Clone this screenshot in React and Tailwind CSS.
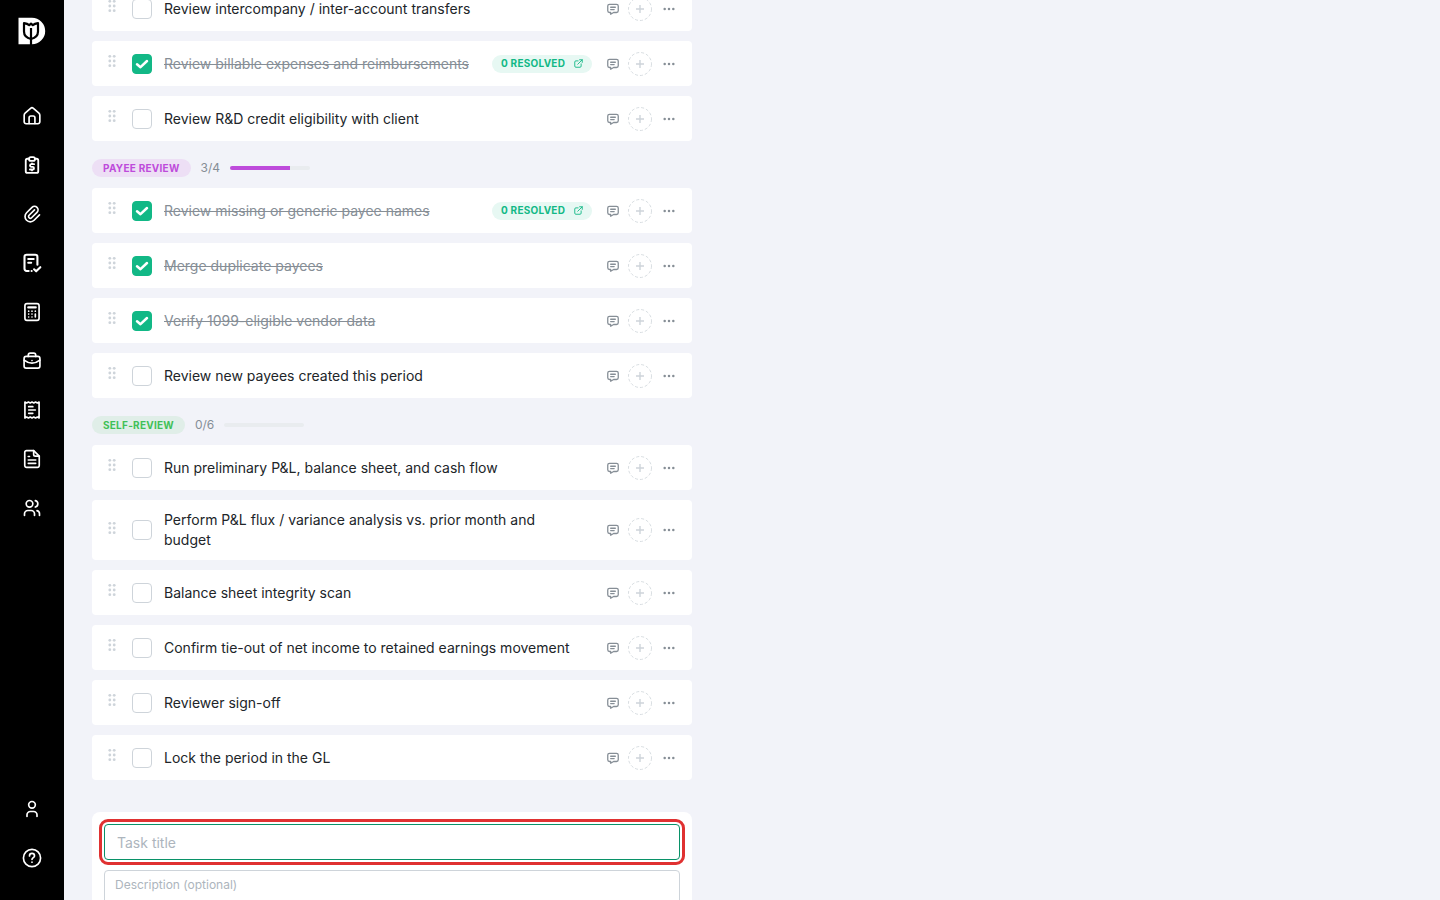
import React, { useState } from "react";
import { TbPaperclip, TbUser, TbUsers } from "react-icons/tb";

function Icon({ children, className = "size-5", strokeWidth = 2 }) {
  return (
    <svg
      viewBox="0 0 24 24"
      fill="none"
      stroke="currentColor"
      strokeWidth={strokeWidth}
      strokeLinecap="round"
      strokeLinejoin="round"
      aria-hidden="true"
      className={className}
    >
      {children}
    </svg>
  );
}

const HomeIcon = () => (
  <Icon>
    <path d="M2.6 11c0-1 .4-1.900 1.100-2.500l6.600-5.700a2.600 2.600 0 0 1 3.400 0l6.600 5.700c.7.6 1.100 1.500 1.100 2.500V19a2.300 2.300 0 0 1-2.300 2.300H4.900A2.300 2.300 0 0 1 2.600 19z" />
    <path d="M8.500 21v-7a2 2 0 0 1 2-2h3a2 2 0 0 1 2 2v7" />
  </Icon>
);

const ClipboardDollarIcon = () => (
  <Icon strokeWidth={2.200}>
    <path d="M8.500 4.500H6.500a2 2 0 0 0-2 2V19.500a2 2 0 0 0 2 2h11a2 2 0 0 0 2-2V6.500a2 2 0 0 0-2-2h-2" />
    <rect x="8.500" y="2.500" width="7" height="4.500" rx="2" />
    <path d="M14.500 11h-3.300a1.500 1.500 0 0 0 0 3.200h1.600a1.500 1.500 0 0 1 0 3.200H9.500M12 10v1M12 17.500v1" />
  </Icon>
);

const NoteCheckIcon = () => (
  <Icon strokeWidth={2.500}>
    <path d="M8 21.500H5.500a2.500 2.500 0 0 1-2.500-2.500V4.500A2.500 2.500 0 0 1 5.500 2h10.500a2.500 2.500 0 0 1 2.500 2.500V14" />
    <path d="M7.500 7.200h6.500M7.500 11.700h3.500M11.500 21.500h.1M14.500 19.500l2.500 2.500 5-5" />
  </Icon>
);

const CalculatorIcon = () => (
  <Icon>
    <rect x="3.500" y="2" width="17" height="20" rx="2.500" />
    <path d="M7.500 6.500h9" strokeWidth="2.600" />
    <path d="M8 11h.01M12 11h.01M16 11h.01M8 14.500h.01M12 14.500h.01M8 18h.01M12 18h.01M16 14.500v3.500" />
  </Icon>
);

const BriefcaseIcon = () => (
  <Icon>
    <rect x="2.500" y="6.500" width="19" height="14" rx="2.500" />
    <path d="M7.500 6.500V5a2.500 2.500 0 0 1 2.500-2.500h4A2.500 2.500 0 0 1 16.500 5v1.500" />
    <path d="M2.500 11c6 4.600 13 4.600 19 0M12 11.500v.01" />
  </Icon>
);

const ReceiptIcon = () => (
  <Icon>
    <path d="M3.500 2.500v19l2.100-1 2.100 1 2.200-1 2.100 1 2.100-1 2.200 1 2.100-1 2.100 1v-19l-2.100 1-2.100-1-2.200 1-2.100-1-2.100 1-2.200-1-2.100 1z" />
    <path d="M8 8h5M8 12h8M8 16h5" />
  </Icon>
);

const FileIcon = () => (
  <Icon>
    <path d="M14 2H5.500A2.200 2.200 0 0 0 3.300 4.200v15.600A2.200 2.200 0 0 0 5.500 22h13a2.200 2.200 0 0 0 2.200-2.200V8.500z" />
    <path d="M14 2v4.500a2 2 0 0 0 2 2h4.500M7.500 9h1.500M7.500 13.200h9M7.500 17.200h9" />
  </Icon>
);

const HelpIcon = () => (
  <Icon>
    <circle cx="12" cy="12" r="10.300" />
    <path d="M9 9.500a3 3 0 0 1 6 0c0 2-3 2.300-3 4.300M12 17v.01" />
  </Icon>
);

function Logo() {
  return (
    <svg viewBox="0 0 28 28" className="size-7" aria-hidden="true">
      <path d="M.5.800H14a13.200 13.200 0 0 1 0 26.400H.5z" fill="#fff" />
      <g fill="none" stroke="#000" strokeWidth="2.200" strokeLinejoin="round">
        <path d="M6 6.200c2.200.3 4 1 5.200 2L13 6.600l1.800 1.600c1.200-1 3-1.700 5.200-2v8.300c0 4-2.800 6.500-7 7.500-4.200-1-7-3.500-7-7.500z" />
        <path d="M13 11v17" />
      </g>
    </svg>
  );
}

const mainNav = [
  ["Home", HomeIcon],
  ["Billing", ClipboardDollarIcon],
  ["Attachments", () => <TbPaperclip className="size-5" />],
  ["Tasks", NoteCheckIcon],
  ["Calculator", CalculatorIcon],
  ["Portfolio", BriefcaseIcon],
  ["Receipts", ReceiptIcon],
  ["Documents", FileIcon],
  ["Team", () => <TbUsers className="size-5" />],
];

const footerNav = [
  ["Account", () => <TbUser className="size-5" />],
  ["Help", HelpIcon],
];

function NavLinks({ items }) {
  return items.map(([label, Glyph]) => (
    <a key={label} href="#" aria-label={label} className="grid size-10 place-items-center">
      <Glyph />
    </a>
  ));
}

function Sidebar() {
  return (
    <aside className="flex w-16 shrink-0 flex-col items-center bg-black pt-[17px] pb-[22px] text-white">
      <a href="#" aria-label="Dashboard">
        <Logo />
      </a>
      <nav aria-label="Main" className="mt-[51px] flex flex-col gap-[9px]">
        <NavLinks items={mainNav} />
      </nav>
      <nav aria-label="Support" className="mt-auto flex flex-col gap-[9px]">
        <NavLinks items={footerNav} />
      </nav>
    </aside>
  );
}

function TaskCard({ title, done = false, resolved }) {
  const [checked, setChecked] = useState(done);
  return (
    <li className="flex min-h-[45px] items-center rounded bg-white px-4 py-2.5">
      <button type="button" aria-label="Reorder task" className="mr-4 pb-[5px] text-[#ced4da]">
        <svg viewBox="0 0 8 14" className="h-3.5 w-2" fill="currentColor" aria-hidden="true">
          <circle cx="1.800" cy="2.300" r="1.400" />
          <circle cx="6.200" cy="2.300" r="1.400" />
          <circle cx="1.800" cy="7" r="1.400" />
          <circle cx="6.200" cy="7" r="1.400" />
          <circle cx="1.800" cy="11.700" r="1.400" />
          <circle cx="6.200" cy="11.700" r="1.400" />
        </svg>
      </button>
      <label className="flex flex-1 items-center gap-3 pr-2">
        <span className="grid shrink-0">
          <input
            type="checkbox"
            checked={checked}
            onChange={(e) => setChecked(e.target.checked)}
            className="col-start-1 row-start-1 size-5 appearance-none rounded border border-[#ced4da] bg-white checked:border-[#12b886] checked:bg-[#12b886]"
          />
          {checked && (
            <svg
              viewBox="0 0 20 20"
              className="pointer-events-none col-start-1 row-start-1 size-5"
              fill="none"
              stroke="#fff"
              strokeWidth="2.500"
              strokeLinecap="round"
              strokeLinejoin="round"
              aria-hidden="true"
            >
              <path d="M5 10.200 8.500 13.200 15 7" />
            </svg>
          )}
        </span>
        <span className={checked ? "text-sm leading-5 text-[#868e96] line-through" : "text-sm leading-5 text-[#212529]"}>
          {title}
        </span>
      </label>
      {resolved !== undefined && (
        <a
          href="#"
          className="flex h-[18px] w-[100px] shrink-0 items-center justify-between rounded-full bg-[#e7f8f3] px-[9px] text-[10px] font-bold tracking-wide text-[#12b886] uppercase"
        >
          {resolved} resolved
          <Icon className="size-[9px]" strokeWidth={2.400}>
            <path d="M11 5H5a3 3 0 0 0-3 3v11a3 3 0 0 0 3 3h11a3 3 0 0 0 3-3v-6M10 14 22 2M15 2h7v7" />
          </Icon>
        </a>
      )}
      <button type="button" aria-label="Comments" className="ml-3.5 shrink-0 text-[#868e96]">
        <Icon className="size-3.5" strokeWidth={2.200}>
          <path d="M8 9h8M8 13h6M18 4a3 3 0 0 1 3 3v8a3 3 0 0 1-3 3h-5l-5 3v-3H6a3 3 0 0 1-3-3V7a3 3 0 0 1 3-3z" />
        </Icon>
      </button>
      <button type="button" aria-label="Assign task" className="ml-2 size-6 shrink-0 text-[#ced4da]">
        <svg viewBox="0 0 24 24" className="size-6" fill="none" stroke="currentColor" aria-hidden="true">
          <circle cx="12" cy="12" r="11.500" strokeDasharray="3 2" opacity=".8" />
          <path d="M12 8v8M8 12h8" strokeWidth="1.400" />
        </svg>
      </button>
      <button type="button" aria-label="More actions" className="ml-2.5 shrink-0 text-[#868e96]">
        <svg viewBox="0 0 14 14" className="size-3.5" fill="currentColor" aria-hidden="true">
          <circle cx="2.700" cy="7" r="1.250" />
          <circle cx="7" cy="7" r="1.250" />
          <circle cx="11.300" cy="7" r="1.250" />
        </svg>
      </button>
    </li>
  );
}

function SectionHeader({ title, done, total, badgeClass, barClass }) {
  return (
    <div className="flex items-center gap-2.5 pt-[18px] pb-[11px]">
      <h2 className={`flex h-[18px] items-center rounded-full px-[11px] text-[10px] font-bold tracking-wide uppercase ${badgeClass}`}>
        {title}
      </h2>
      <span className="text-xs leading-[18px] text-[#868e96]">
        {done}/{total}
      </span>
      <div className="h-1 w-20 overflow-hidden rounded-full bg-[#e9ecef]">
        <div className={`h-full ${barClass}`} style={{ width: `${(done / total) * 100}%` }} />
      </div>
    </div>
  );
}

function TaskList({ tasks }) {
  return (
    <ul className="flex flex-col gap-2.5">
      {tasks.map((task) => (
        <TaskCard key={task.title} {...task} />
      ))}
    </ul>
  );
}

const reviewTasks = [
  { title: "Review intercompany / inter-account transfers" },
  { title: "Review billable expenses and reimbursements", done: true, resolved: 0 },
  { title: "Review R&D credit eligibility with client" },
];

const payeeTasks = [
  { title: "Review missing or generic payee names", done: true, resolved: 0 },
  { title: "Merge duplicate payees", done: true },
  { title: "Verify 1099-eligible vendor data", done: true },
  { title: "Review new payees created this period" },
];

const selfReviewTasks = [
  { title: "Run preliminary P&L, balance sheet, and cash flow" },
  { title: "Perform P&L flux / variance analysis vs. prior month and budget" },
  { title: "Balance sheet integrity scan" },
  { title: "Confirm tie-out of net income to retained earnings movement" },
  { title: "Reviewer sign-off" },
  { title: "Lock the period in the GL" },
];

export default function App() {
  return (
    <div className="flex h-screen overflow-hidden bg-[#f2f3f9] font-['Inter',sans-serif]">
      <Sidebar />
      <main className="min-w-0 flex-1 overflow-hidden px-7">
        <div className="-mt-3.5 max-w-[600px]">
          <TaskList tasks={reviewTasks} />
          <SectionHeader title="Payee review" done={3} total={4} badgeClass="bg-[#eddff5] text-[#be4bdb]" barClass="bg-[#be4bdb]" />
          <TaskList tasks={payeeTasks} />
          <SectionHeader title="Self-review" done={0} total={6} badgeClass="bg-[#e0eee8] text-[#40c057]" barClass="bg-[#40c057]" />
          <TaskList tasks={selfReviewTasks} />
          <form className="mt-8 flex flex-col gap-2.5 rounded-lg bg-white p-3" onSubmit={(e) => e.preventDefault()}>
            <input
              type="text"
              aria-label="Task title"
              placeholder="Task title"
              className="h-9 rounded border border-[#099268] px-3 text-sm text-[#212529] outline-3 outline-offset-2 outline-[#e03131] placeholder:text-[#adb5bd]"
            />
            <textarea
              aria-label="Description"
              placeholder="Description (optional)"
              className="h-20 resize-none rounded border border-[#ced4da] px-2.5 py-1.5 text-xs text-[#212529] outline-none placeholder:text-[#adb5bd]"
            />
          </form>
        </div>
      </main>
    </div>
  );
}
